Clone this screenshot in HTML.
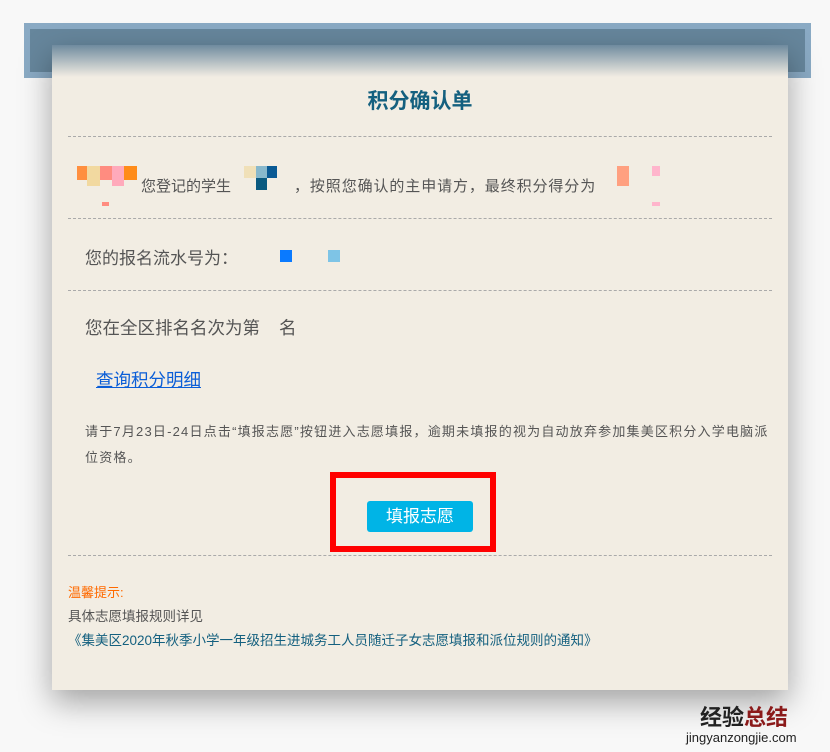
<!DOCTYPE html><html><head><meta charset="utf-8"><style>
body{margin:0;width:830px;height:752px;background:#f8f8f8;position:relative;overflow:hidden;font-family:"Liberation Sans","Noto Sans CJK SC",sans-serif;}
.frame{position:absolute;left:24px;top:23px;width:775px;height:43px;background:#66869c;border:6px solid #8aaac4;}
.paper{position:absolute;left:52px;top:45px;width:736px;height:645px;background:#f2ede3;box-shadow:0 12px 30px rgba(0,0,0,.35);}
.grad{position:absolute;left:0;top:0;width:736px;height:32px;background:linear-gradient(#6f8b9f,#f2ede3);}
.dash{position:absolute;left:16px;width:704px;border-top:1px dashed #aaa;}
.t{position:absolute;white-space:nowrap;color:#555;}
.blk{position:absolute;}
</style></head><body>
<div class="frame"></div>
<div class="paper">
<div class="grad"></div>
<div class="t" style="left:0;width:736px;text-align:center;top:40px;font-size:21px;font-weight:bold;color:#14607f">积分确认单</div>
<div class="dash" style="top:91px"></div>
<div class="blk" style="left:25px;top:121px;width:10px;height:14px;background:#ff8f3f"></div>
<div class="blk" style="left:35px;top:121px;width:13px;height:20px;background:#f2d9a0"></div>
<div class="blk" style="left:48px;top:121px;width:12px;height:14px;background:#ff8c80"></div>
<div class="blk" style="left:60px;top:121px;width:12px;height:20px;background:#ffaabb"></div>
<div class="blk" style="left:72px;top:121px;width:13px;height:14px;background:#ff8c1a"></div>
<div class="blk" style="left:50px;top:157px;width:7px;height:4px;background:#ff8c80"></div>
<div class="t" style="left:89px;top:130px;font-size:15px">您登记的学生</div>
<div class="blk" style="left:192px;top:121px;width:12px;height:12px;background:#f0e0b8"></div>
<div class="blk" style="left:204px;top:121px;width:11px;height:12px;background:#88b8cc"></div>
<div class="blk" style="left:215px;top:121px;width:10px;height:12px;background:#0a5a94"></div>
<div class="blk" style="left:204px;top:133px;width:11px;height:12px;background:#0a5a80"></div>
<div class="t" style="left:242px;top:130px;font-size:15px;letter-spacing:0.9px">，按照您确认的主申请方，最终积分得分为</div>
<div class="blk" style="left:565px;top:121px;width:12px;height:20px;background:#ffa080"></div>
<div class="blk" style="left:600px;top:121px;width:8px;height:10px;background:#ffb5cc"></div>
<div class="blk" style="left:600px;top:157px;width:8px;height:4px;background:#ffb5cc"></div>
<div class="dash" style="top:173px"></div>
<div class="t" style="left:33px;top:199px;font-size:17px">您的报名流水号为：</div>
<div class="blk" style="left:228px;top:205px;width:12px;height:12px;background:#0a7aff"></div>
<div class="blk" style="left:276px;top:205px;width:12px;height:12px;background:#7ec4e6"></div>
<div class="dash" style="top:245px"></div>
<div class="t" style="left:33px;top:270px;font-size:17.5px">您在全区排名名次为第<span style="display:inline-block;width:19px"></span>名</div>
<div class="t" style="left:44px;top:322px;font-size:17.5px;color:#0b5ed7;text-decoration:underline">查询积分明细</div>
<div class="t" style="left:33px;top:374px;font-size:13px;line-height:26px;letter-spacing:1.2px">请于7月23日-24日点击“填报志愿”按钮进入志愿填报，逾期未填报的视为自动放弃参加集美区积分入学电脑派<br>位资格。</div>
<div class="blk" style="left:278px;top:427px;width:154px;height:68px;border:6px solid #f00"></div>
<div class="blk" style="left:315px;top:456px;width:106px;height:31px;background:#00b4e6;border-radius:3px;color:#fff;font-size:17px;line-height:31px;text-align:center">填报志愿</div>
<div class="dash" style="top:510px"></div>
<div class="t" style="left:16px;top:537px;font-size:13px;color:#ff6a00">温馨提示:</div>
<div class="t" style="left:16px;top:560px;font-size:13.5px">具体志愿填报规则详见</div>
<div class="t" style="left:16px;top:584px;font-size:13.5px;color:#14607f">《集美区2020年秋季小学一年级招生进城务工人员随迁子女志愿填报和派位规则的通知》</div>
</div>
<div class="t" style="left:700px;top:700px;font-size:22px;font-weight:bold;color:#222">经验<span style="color:#8b1a1a">总结</span></div>
<div class="t" style="left:686px;top:730px;font-size:13px;color:#222">jingyanzongjie.com</div>
</body></html>
